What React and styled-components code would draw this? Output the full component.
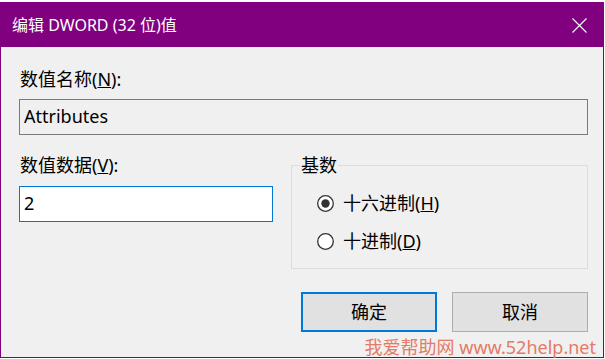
import React from "react";
import styled, { createGlobalStyle } from "styled-components";

const Global = createGlobalStyle`
  html, body { margin: 0; padding: 0; background: #ffffff; }
  body { font-family: "Noto Sans", "Noto Sans CJK SC", sans-serif; }
  * { box-sizing: border-box; }
`;

const Page = styled.div`
  padding-top: 2px;
  width: 605px;
  height: 359px;
`;

const Window = styled.div`
  width: 604px;
  height: 356px;
  border: 1px solid #800080;
  border-top: none;
  background: #f0f0f0;
  display: flex;
  flex-direction: column;
  position: relative;
`;

const TitleBar = styled.div`
  height: 45px;
  margin: 0 -1px;
  background: #800080;
  display: flex;
  align-items: center;
  justify-content: space-between;
  padding: 0 17px 0 12px;
  color: #ffffff;
  font-size: 16px;
  line-height: 20px;
`;

const Title = styled.span`
  padding-top: 1px;
`;

const Close = styled.svg`
  display: block;
  width: 15px;
  height: 15px;
  margin-top: 2px;
`;

const Content = styled.div`
  flex: 1;
  padding: 20px 15px 0 18px;
  display: flex;
  flex-direction: column;
  font-size: 18px;
  line-height: 24px;
  color: #000000;
`;

const Label = styled.div`
  height: 24px;
  white-space: nowrap;
  padding-left: 1px;
`;

const Field = styled.div`
  margin-top: ${(p) => p.$gap || 8}px;
  height: 36px;
  width: 100%;
  border: 1px solid ${(p) => (p.$focused ? "#0078d7" : "#7a7a7a")};
  background: ${(p) => (p.$focused ? "#ffffff" : "#f0f0f0")};
  padding: 4px 0 0 4px;
  white-space: nowrap;
`;

const Row = styled.div`
  margin-top: 18px;
  display: flex;
  align-items: flex-start;
  justify-content: space-between;
`;

const Column = styled.div`
  display: flex;
  flex-direction: column;
  width: 254px;
`;

const Group = styled.fieldset`
  margin: 0;
  width: 297px;
  height: 116px;
  border: 1px solid #dcdcdc;
  padding: 0;
  min-inline-size: 0;
`;

const Legend = styled.legend`
  margin-left: 8px;
  padding: 0 1px;
  line-height: 24px;
`;

const Options = styled.div`
  display: flex;
  flex-direction: column;
  gap: 14px;
  padding: 14px 0 0 25px;
`;

const Option = styled.label`
  display: flex;
  align-items: center;
  gap: 9px;
  height: 24px;
`;

const RadioSvg = styled.svg`
  display: block;
  flex: 0 0 auto;
  width: 17px;
  height: 17px;
`;

function Radio({ checked }) {
  return (
    <RadioSvg viewBox="0 0 17 17">
      <circle cx="8.5" cy="8.5" r="7.8" fill="#ffffff" stroke="#333333" strokeWidth="1.3" />
      {checked && <circle cx="8.5" cy="8.5" r="4.2" fill="#333333" />}
    </RadioSvg>
  );
}

const Buttons = styled.div`
  margin-top: 23px;
  display: flex;
  justify-content: flex-end;
  gap: 15px;
`;

const Button = styled.button`
  width: 136px;
  height: 40px;
  margin: 0;
  font: inherit;
  font-size: 18px;
  color: #000000;
  background: #e1e1e1;
  border: ${(p) => (p.$primary ? "2px solid #0078d7" : "1px solid #adadad")};
  padding: 0;
`;

const Watermark = styled.div`
  position: absolute;
  right: 7px;
  bottom: 0;
  font-size: 18px;
  line-height: 20px;
  color: #e57a66;
  white-space: nowrap;
`;

export default function App() {
  return (
    <>
      <Global />
      <Page>
        <Window>
          <TitleBar>
            <Title>编辑 DWORD (32 位)值</Title>
            <Close viewBox="0 0 15 15">
              <path d="M0.5 0.5 L14.5 14.5 M14.5 0.5 L0.5 14.5" stroke="#ffffff" strokeWidth="1.1" fill="none" />
            </Close>
          </TitleBar>
          <Content>
            <Label>
              数值名称(<u>N</u>):
            </Label>
            <Field>Attributes</Field>
            <Row>
              <Column>
                <Label>
                  数值数据(<u>V</u>):
                </Label>
                <Field $focused $gap={9}>2</Field>
              </Column>
              <Group>
                <Legend>基数</Legend>
                <Options>
                  <Option>
                    <Radio checked />
                    <span>
                      十六进制(<u>H</u>)
                    </span>
                  </Option>
                  <Option>
                    <Radio />
                    <span>
                      十进制(<u>D</u>)
                    </span>
                  </Option>
                </Options>
              </Group>
            </Row>
            <Buttons>
              <Button $primary>确定</Button>
              <Button>取消</Button>
            </Buttons>
          </Content>
          <Watermark>我爱帮助网 www.52help.net</Watermark>
        </Window>
      </Page>
    </>
  );
}
